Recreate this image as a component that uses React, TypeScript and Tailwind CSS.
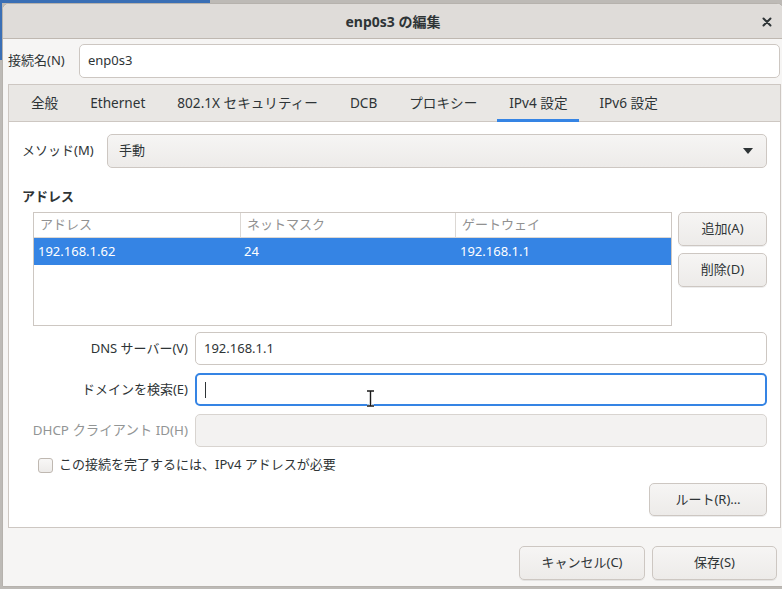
import React from "react";

const font = { fontFamily: '"Noto Sans", "Noto Sans CJK JP", sans-serif' };

function Btn({ children, className = "" }: { children: React.ReactNode; className?: string }) {
  return (
    <div
      className={
        "flex items-center justify-center rounded-[5px] border border-[#cdc7c2] bg-gradient-to-b from-[#f6f5f4] to-[#edebe9] text-[13px] text-[#2e3436] shadow-[0_1px_0_rgba(0,0,0,0.07)] " +
        className
      }
    >
      {children}
    </div>
  );
}

export default function App() {
  const tabs = ["全般", "Ethernet", "802.1X セキュリティー", "DCB", "プロキシー", "IPv4 設定", "IPv6 設定"];
  return (
    <div className="relative w-[782px] h-[589px] overflow-hidden bg-[#bdbab6]" style={font}>
      <div className="absolute left-0 top-0 h-[3px] w-[210px] bg-[#3a6fb5]" />
      <div className="absolute left-0 top-0 h-[60px] w-[2px] bg-[#3a6fb5]" />
      <div className="absolute left-[2px] top-[3px] w-[782px] h-[584px] flex flex-col rounded-t-[7px] border border-[#b6b2ad] bg-[#f6f5f4] overflow-hidden">
        {/* header bar */}
        <div className="relative h-[35px] shrink-0 flex items-center justify-center bg-[#dfdcd9] border-b border-[#bfb8b1]">
          <span className="text-[14px] font-bold text-[#2e3436]">enp0s3 の編集</span>
          <svg className="absolute left-[759px] top-[13px]" width="10" height="10" viewBox="0 0 10 10">
            <path d="M1.5 1.5 L8.5 8.5 M8.5 1.5 L1.5 8.5" stroke="#2e3436" strokeWidth="2" strokeLinecap="round" />
          </svg>
        </div>
        {/* connection name */}
        <div className="flex items-center mt-[5px] pl-[5px] pr-[3px] h-[34px]">
          <span className="w-[71px] shrink-0 text-[13px] text-[#2e3436]">接続名(N)</span>
          <div className="flex-1 h-[34px] rounded-[5px] border border-[#cdc7c2] bg-white flex items-center pl-[8px] text-[13px] text-[#2e3436]">
            enp0s3
          </div>
        </div>
        {/* notebook */}
        <div className="mt-[6px] ml-[5px] mr-[2px] h-[444px] flex flex-col border border-[#cdc7c2] bg-white">
          <div className="h-[37px] shrink-0 flex bg-[#e9e7e4] border-b border-[#cdc7c2] pl-[10px] gap-[8px]">
            {tabs.map((t, i) => (
              <div key={t} className="relative flex items-center px-[12px] text-[13.6px] text-[#2e3436]">
                {t}
                {i === 5 && <div className="absolute left-0 right-0 bottom-[-1px] h-[3px] bg-[#3584e4]" />}
              </div>
            ))}
          </div>
          <div className="flex flex-col px-[13px] pt-[12px] text-[13px] text-[#2e3436]">
            {/* method */}
            <div className="flex items-center h-[34px]">
              <span className="w-[85px] shrink-0">メソッド(M)</span>
              <div className="flex-1 h-[34px] rounded-[5px] border border-[#cdc7c2] bg-gradient-to-b from-[#f6f5f4] to-[#edebe9] flex items-center justify-between pl-[11px] pr-[12px]">
                <span>手動</span>
                <svg width="12" height="8" viewBox="0 0 12 8">
                  <path d="M1 1 L11 1 L6 7 Z" fill="#2e3436" />
                </svg>
              </div>
            </div>
            <div className="mt-[20px] font-bold h-[16px] leading-[16px]">アドレス</div>
            {/* table + buttons */}
            <div className="flex mt-[8px] ml-[11px] gap-[6px]">
              <div className="w-[639px] h-[114px] border border-[#cdc7c2] bg-white flex flex-col">
                <div className="h-[25px] flex border-b border-[#dcd8d4] text-[#919191]">
                  <div className="w-[207px] pl-[6px] flex items-center border-r border-[#dcd8d4]">アドレス</div>
                  <div className="w-[215px] pl-[6px] flex items-center border-r border-[#dcd8d4]">ネットマスク</div>
                  <div className="flex-1 pl-[6px] flex items-center">ゲートウェイ</div>
                </div>
                <div className="h-[27px] flex bg-[#3584e4] text-white">
                  <div className="w-[207px] pl-[4px] flex items-center">192.168.1.62</div>
                  <div className="w-[215px] pl-[3px] flex items-center">24</div>
                  <div className="flex-1 pl-[4px] flex items-center">192.168.1.1</div>
                </div>
              </div>
              <div className="flex flex-col gap-[7px]">
                <Btn className="w-[89px] h-[34px]">追加(A)</Btn>
                <Btn className="w-[89px] h-[34px]">削除(D)</Btn>
              </div>
            </div>
            {/* DNS etc */}
            <div className="flex flex-col gap-[8px] mt-[6px]">
              <div className="flex items-center h-[33px]">
                <span className="w-[173px] shrink-0 text-right pr-[7px]">DNS サーバー(V)</span>
                <div className="flex-1 h-[33px] rounded-[5px] border border-[#cdc7c2] bg-white flex items-center pl-[8px]">192.168.1.1</div>
              </div>
              <div className="flex items-center h-[33px]">
                <span className="w-[173px] shrink-0 text-right pr-[7px]">ドメインを検索(E)</span>
                <div className="relative flex-1 h-[33px] rounded-[5px] border-2 border-[#3584e4] bg-white flex items-center pl-[8px]">
                  <div className="w-[1px] h-[16px] bg-[#2e3436]" />
                  <svg className="absolute left-[169px] top-[15px]" width="9" height="17" viewBox="0 0 9 17">
                    <path d="M1 1 H8 M4.5 1 V16 M1 16 H8" stroke="#ffffff" strokeWidth="3" fill="none" />
                    <path d="M1 1 H8 M4.5 1 V16 M1 16 H8" stroke="#1a1a1a" strokeWidth="1.4" fill="none" />
                  </svg>
                </div>
              </div>
              <div className="flex items-center h-[33px]">
                <span className="w-[173px] shrink-0 text-right pr-[7px] text-[#929595] text-[13.4px] whitespace-nowrap">DHCP クライアント ID(H)</span>
                <div className="flex-1 h-[33px] rounded-[5px] border border-[#d8d4d0] bg-[#f3f2f1]" />
              </div>
            </div>
            {/* checkbox */}
            <div className="flex items-center mt-[10px] ml-[16px] h-[16px]">
              <div className="w-[15px] h-[15px] rounded-[3px] border border-[#bfb8b1] bg-gradient-to-b from-[#f8f7f6] to-[#edebe9]" />
              <span className="ml-[6px]">この接続を完了するには、IPv4 アドレスが必要</span>
            </div>
            <div className="flex justify-end mt-[10px]">
              <Btn className="w-[118px] h-[33px]">ルート(R)…</Btn>
            </div>
          </div>
        </div>
        {/* bottom buttons */}
        <div className="flex justify-end gap-[7px] mt-[18px] pr-[6px]">
          <Btn className="w-[126px] h-[34px]">キャンセル(C)</Btn>
          <Btn className="w-[125px] h-[34px]">保存(S)</Btn>
        </div>
      </div>
    </div>
  );
}
